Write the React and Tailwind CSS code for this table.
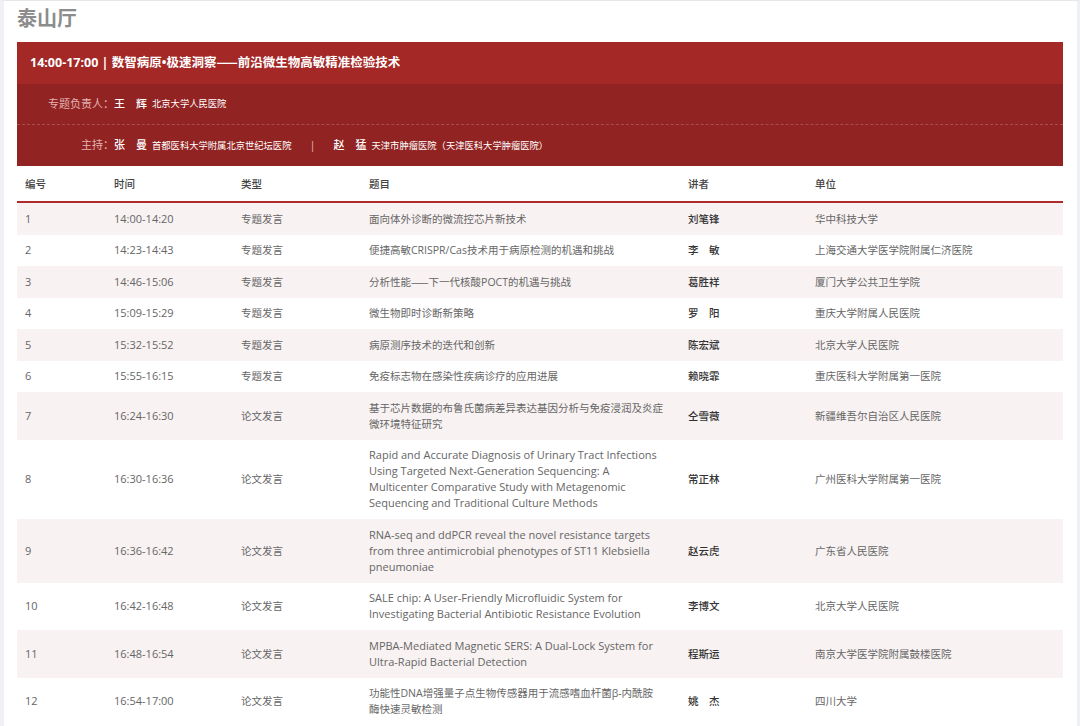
const rows = [
	{ no: "1", time: "14:00-14:20", type: "专题发言", title: ["面向体外诊断的微流控芯片新技术"], speaker: "刘笔锋", unit: "华中科技大学" },
	{ no: "2", time: "14:23-14:43", type: "专题发言", title: ["便捷高敏CRISPR/Cas技术用于病原检测的机遇和挑战"], speaker: "李　敏", unit: "上海交通大学医学院附属仁济医院" },
	{ no: "3", time: "14:46-15:06", type: "专题发言", title: [<>分析性能<Dash />下一代核酸POCT的机遇与挑战</>], speaker: "葛胜祥", unit: "厦门大学公共卫生学院" },
	{ no: "4", time: "15:09-15:29", type: "专题发言", title: ["微生物即时诊断新策略"], speaker: "罗　阳", unit: "重庆大学附属人民医院" },
	{ no: "5", time: "15:32-15:52", type: "专题发言", title: ["病原测序技术的迭代和创新"], speaker: "陈宏斌", unit: "北京大学人民医院" },
	{ no: "6", time: "15:55-16:15", type: "专题发言", title: ["免疫标志物在感染性疾病诊疗的应用进展"], speaker: "赖晓霏", unit: "重庆医科大学附属第一医院" },
	{ no: "7", time: "16:24-16:30", type: "论文发言", title: ["基于芯片数据的布鲁氏菌病差异表达基因分析与免疫浸润及炎症", "微环境特征研究"], speaker: "仝雪薇", unit: "新疆维吾尔自治区人民医院" },
	{
		no: "8",
		time: "16:30-16:36",
		type: "论文发言",
		latin: true,
		title: [
			"Rapid and Accurate Diagnosis of Urinary Tract Infections",
			"Using Targeted Next-Generation Sequencing: A",
			"Multicenter Comparative Study with Metagenomic",
			"Sequencing and Traditional Culture Methods",
		],
		speaker: "常正林",
		unit: "广州医科大学附属第一医院",
	},
	{
		no: "9",
		time: "16:36-16:42",
		type: "论文发言",
		latin: true,
		title: [
			"RNA-seq and ddPCR reveal the novel resistance targets",
			"from three antimicrobial phenotypes of ST11 Klebsiella",
			"pneumoniae",
		],
		speaker: "赵云虎",
		unit: "广东省人民医院",
	},
	{
		no: "10",
		time: "16:42-16:48",
		type: "论文发言",
		latin: true,
		title: ["SALE chip: A User-Friendly Microfluidic System for", "Investigating Bacterial Antibiotic Resistance Evolution"],
		speaker: "李博文",
		unit: "北京大学人民医院",
	},
	{
		no: "11",
		time: "16:48-16:54",
		type: "论文发言",
		latin: true,
		title: ["MPBA-Mediated Magnetic SERS: A Dual-Lock System for", "Ultra-Rapid Bacterial Detection"],
		speaker: "程斯运",
		unit: "南京大学医学院附属鼓楼医院",
	},
	{
		no: "12",
		time: "16:54-17:00",
		type: "论文发言",
		title: ["功能性DNA增强量子点生物传感器用于流感嗜血杆菌β-内酰胺", "酶快速灵敏检测"],
		speaker: "姚　杰",
		unit: "四川大学",
	},
];

// em dashes drawn by the CJK face so they join up
function Dash() {
	return <span className="font-['Noto_Sans_CJK_SC',sans-serif]">——</span>;
}

const font = "font-['Open_Sans','Noto_Sans_CJK_SC',sans-serif]";

export default function App() {
	return (
		<div className={`${font} min-h-screen bg-white border-t border-[#e6e7ea] border-l-4 border-l-[#f0f1f4] border-r-[3px] border-r-[#eef0f3] pl-[13px] pr-[14px]`}>
			{/* Hall name */}
			<h1 className="pt-[3px] h-[41px] text-[20px] leading-[28px] font-bold text-[#8c8c8c] font-['Noto_Sans_CJK_SC',sans-serif]">泰山厅</h1>

			{/* Session header */}
			<div className="text-white">
				<div className="h-[42px] bg-[#a32826] flex items-center pl-[13px] text-[12.5px] font-bold">
					<span>
						14:00-17:00 | 数智病原•极速洞察<Dash />前沿微生物高敏精准检验技术
					</span>
				</div>
				<div className="bg-[#912322]">
					<div className="h-[41px] flex items-center border-b border-dashed border-white/20 text-[11px]">
						<span className="w-[97px] text-right text-[#e3b3b3]">专题负责人：</span>
						<span className="font-medium">王　辉</span>
						<span className="ml-[5px] text-[9.3px]">北京大学人民医院</span>
					</div>
					<div className="h-[41px] flex items-center text-[11px]">
						<span className="w-[97px] text-right text-[#e3b3b3]">主持：</span>
						<span className="font-medium">张　曼</span>
						<span className="ml-[5px] text-[9.3px]">首都医科大学附属北京世纪坛医院</span>
						<span className="mx-[18px] text-[#e3b3b3]">|</span>
						<span className="font-medium">赵　猛</span>
						<span className="ml-[5px] text-[9.3px]">天津市肿瘤医院（天津医科大学肿瘤医院）</span>
					</div>
				</div>
			</div>

			{/* Schedule table */}
			<table className="w-full table-fixed border-collapse text-[10.5px] leading-4">
				<colgroup>
					<col className="w-[89px]" />
					<col className="w-[127px]" />
					<col className="w-[128px]" />
					<col className="w-[319px]" />
					<col className="w-[127px]" />
					<col />
				</colgroup>
				<thead>
					<tr className="h-[36px] border-b-2 border-[#b02b2b] text-left text-[#444]">
						<th className="px-2 font-medium">编号</th>
						<th className="px-2 font-medium">时间</th>
						<th className="px-2 font-medium">类型</th>
						<th className="px-2 font-medium">题目</th>
						<th className="px-2 font-medium">讲者</th>
						<th className="px-2 font-medium">单位</th>
					</tr>
				</thead>
				<tbody className="text-[#666]">
					{rows.map((r, i) => (
						<tr key={r.no} className={i % 2 === 0 ? "bg-[#f8f2f2]" : "bg-white"}>
							<td className="px-2 py-[7.75px] text-[11px]">{r.no}</td>
							<td className="px-2 py-[7.75px] text-[11px]">{r.time}</td>
							<td className="px-2 py-[7.75px]">{r.type}</td>
							<td className={`px-2 py-[7.75px] whitespace-nowrap ${r.latin ? "text-[11px]" : ""}`}>
								{r.title.map((line, j) => (
									<div key={j}>{line}</div>
								))}
							</td>
							<td className="px-2 py-[7.75px] text-[#333] font-medium">{r.speaker}</td>
							<td className="px-2 py-[7.75px]">{r.unit}</td>
						</tr>
					))}
				</tbody>
			</table>
		</div>
	);
}
